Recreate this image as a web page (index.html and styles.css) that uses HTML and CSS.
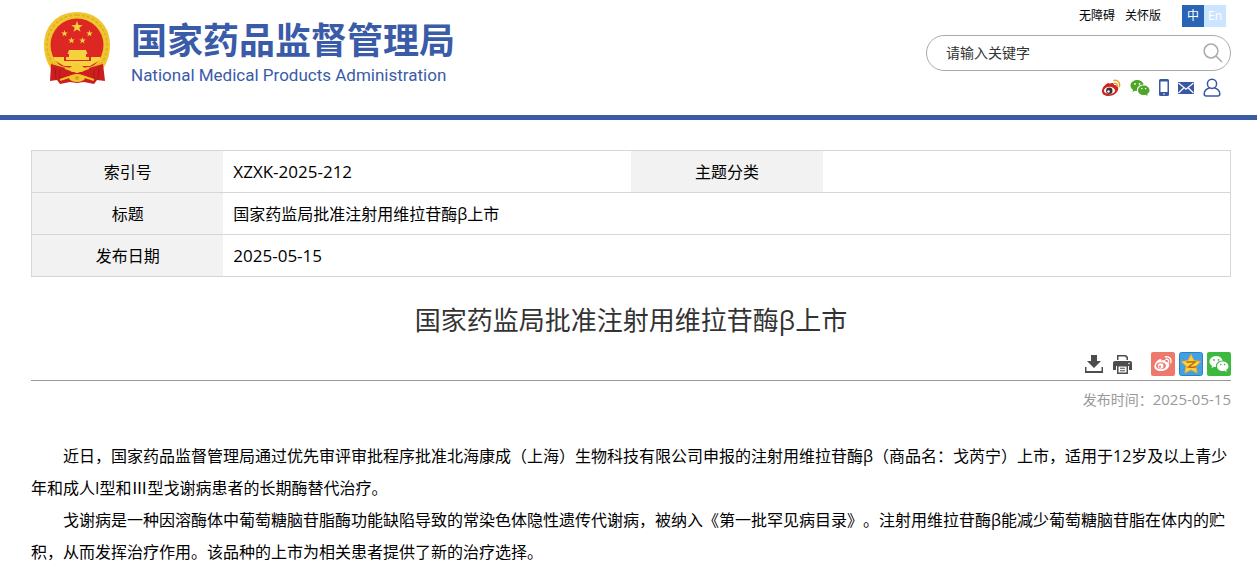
FILE: index.html
```html
<!DOCTYPE html>
<html lang="zh-CN">
<head>
<meta charset="utf-8">
<meta name="viewport" content="width=device-width, initial-scale=1">
<title>国家药监局批准注射用维拉苷酶β上市</title>
<link rel="stylesheet" href="styles.css">
</head>
<body>
<svg class="defs" aria-hidden="true">
  <symbol id="star" viewBox="-10 -10 20 20"><path d="M0-10 2.3-3.2 9.5-3.1 3.8 1.2 5.9 8.1 0 4-5.9 8.1-3.8 1.2-9.5-3.1-2.3-3.2z"/></symbol>
  <symbol id="wechat" viewBox="0 0 20 18">
    <path fill-rule="evenodd" d="M7.2 1C3.4 1 .5 3.500.5 6.500c0 1.800 1 3.400 2.600 4.400L2.500 13l2.500-1.300c.6.200 1.300.3 2 .3-.7-3.600 2.500-6.500 6.700-6.500C13 2.900 10.400 1 7.200 1zM5 4a.9.9 0 1 1 0 1.800A.9.9 0 0 1 5 4zm4.500 0a.9.900 0 1 1 0 1.800.9.900 0 0 1 0-1.800z"/>
    <path fill-rule="evenodd" d="M13.700 6.400c-3.200 0-5.700 2.100-5.700 4.800S10.500 16 13.700 16c.7 0 1.300-.1 1.900-.3l2.100 1.200-.5-1.900c1.400-.9 2.300-2.200 2.300-3.800 0-2.700-2.600-4.800-5.800-4.800zM11.800 8.800a.8.800 0 1 1 0 1.600.8.800 0 0 1 0-1.600zm3.800 0a.8.800 0 1 1 0 1.600.8.800 0 0 1 0-1.600z"/>
  </symbol>
</svg>
<header class="site-header">
  <a class="brand" href="#">
    <svg class="emblem" viewBox="0 0 68 76" aria-hidden="true">
      <path d="M34 1C14 1 1 15 1 34c0 14 6 25 14 31h38c8-6 14-17 14-31C67 15 54 1 34 1z" fill="#efc62f"/>
      <path d="M34 4C17 4 4 17 4 34c0 10 4 18 9 23" fill="none" stroke="#dfae24" stroke-width="1.500" stroke-dasharray="3 2"/>
      <path d="M34 4c17 0 30 13 30 30 0 10-4 18-9 23" fill="none" stroke="#dfae24" stroke-width="1.500" stroke-dasharray="3 2"/>
      <circle cx="34" cy="34" r="26.500" fill="#dd2722"/>
      <g fill="#f6d23f">
        <use href="#star" x="28" y="10" width="12" height="12"/>
        <use href="#star" x="18" y="19" width="7" height="7"/>
        <use href="#star" x="43" y="19" width="7" height="7"/>
        <use href="#star" x="25" y="26" width="7" height="7"/>
        <use href="#star" x="36" y="26" width="7" height="7"/>
        <path d="M26 39h17l1.500 4H43v3h3v3H23v-3h3v-3h-1.500z"/>
        <path d="M11 46h10v4h27v-4h9v3L47 55H21l-10-6z"/>
      </g>
      <path d="M11 50q5 7 23 7t23-7v6l-8 3H19l-8-3z" fill="#e9b92c"/>
      <path d="M8 53l14 4 7 4h10l7-4 14-4 2 17-8-1-3 4-10-2-7 1-7-1-10 2-3-4-7 1z" fill="#cc1e1f"/>
      <path d="M12 57l1 11M17 59v11M51 59v11M56 57l-1 11" stroke="#a91519"/>
      <path d="M22 57l12 4 12-4M17 69l12-4m22 4-12-4" fill="none" stroke="#f0c52e" stroke-width="2"/>
      <ellipse cx="34" cy="67" rx="8" ry="4" fill="#f0c52e"/>
      <path d="M25 58l4-3 2-3 3 1 3-1 2 3 4 3-9 4z" fill="#f5cd38"/>
      <circle cx="34" cy="67" r="2" fill="#d9a31d"/>
    </svg>
    <span class="brand-text">
      <span class="brand-cn">国家药品监督管理局</span>
      <span class="brand-en">National Medical Products Administration</span>
    </span>
  </a>
  <div class="tools">
    <nav class="top-links" aria-label="辅助功能">
      <a href="#">无障碍</a>
      <a href="#">关怀版</a>
      <span class="langs"><a class="lang lang-on" href="#">中</a><a class="lang" href="#" lang="en">En</a></span>
    </nav>
    <form class="search">
      <input class="search-input" type="text" placeholder="请输入关键字" aria-label="请输入关键字">
      <button class="search-button" type="button" aria-label="搜索">
        <svg width="20" height="20" viewBox="0 0 20 20" fill="none" stroke="#aaa" stroke-width="1.500"><circle cx="8" cy="8" r="6.900"/><path d="M13 13l6 6"/></svg>
      </button>
    </form>
    <nav class="social" aria-label="联系方式">
      <a href="#" aria-label="微博">
        <svg width="20" height="18" viewBox="0 0 20 18"><path d="M8 5c2-1 5-2 5 1 3 0 5 2 4 5s-5 6-9.500 6S.500 14.500 1 11.500C1.500 8 5.500 4 7.500 4c1 0 1.200.5.500 1z" fill="#cf2424"/><ellipse cx="8.500" cy="11.500" rx="5.500" ry="3.700" fill="#fff"/><circle cx="8.300" cy="11.800" r="3.200" fill="#3a2d2d"/><circle cx="7.500" cy="12.500" r="1.200" fill="#fff"/><path d="M13 1.500c4-.8 6.500 2.500 5.300 6M13.500 4.200c2-.3 3 1 2.500 2.800" fill="none" stroke="#eaa12e" stroke-width="1.500" stroke-linecap="round"/></svg>
      </a>
      <a href="#" aria-label="微信"><svg width="20" height="18" fill="#4da628"><use href="#wechat"/></svg></a>
      <a href="#" aria-label="手机版">
        <svg width="10" height="17" viewBox="0 0 10 17"><rect width="10" height="17" rx="1.500" fill="#3a58a2"/><path d="M1.500 2.500h7V13h-7z" fill="#fff"/><circle cx="5" cy="15" r=".8" fill="#fff"/></svg>
      </a>
      <a href="#" aria-label="邮箱">
        <svg width="16" height="12" viewBox="0 0 16 12"><path d="M0 0h16v12H0z" fill="#3a58a2"/><path d="M.500 1 8 7.200 15.500 1M.500 11 5.700 6M15.500 11l-5.200-5" fill="none" stroke="#fff" stroke-width="1.200"/></svg>
      </a>
      <a href="#" aria-label="个人中心">
        <svg width="18" height="19" viewBox="0 0 18 19" fill="none" stroke="#3a58a2" stroke-width="1.500"><circle cx="9" cy="5.800" r="4.600"/><path d="M6.500 10C3 11 1.200 13.500 1.200 16c0 1.500.5 2 2 2h11.600c1.500 0 2-.5 2-2 0-2.500-1.800-5-5.300-6"/></svg>
      </a>
    </nav>
  </div>
</header>
<main class="page">
  <table class="meta">
    <colgroup><col class="col-label"><col class="col-value"><col class="col-label"><col class="col-value"></colgroup>
    <tbody>
      <tr><th scope="row">索引号</th><td><span class="latin">XZXK-2025-212</span></td><th scope="row">主题分类</th><td></td></tr>
      <tr><th scope="row">标题</th><td colspan="3">国家药监局批准注射用维拉苷酶β上市</td></tr>
      <tr><th scope="row">发布日期</th><td colspan="3"><span class="latin">2025-05-15</span></td></tr>
    </tbody>
  </table>
  <h1 class="title">国家药监局批准注射用维拉苷酶β上市</h1>
  <div class="actions">
    <button class="action" type="button" aria-label="下载">
      <svg width="18" height="18" viewBox="0 0 18 18" fill="#4d4d4d"><path d="M6 0h6v6h4l-7 7-7-7h4z"/><path d="M0 12h1.500v4h15v-4H18v6H0z"/></svg>
    </button>
    <button class="action" type="button" aria-label="打印">
      <svg width="19" height="19" viewBox="0 0 19 19"><path d="M4 0h9l2 2v3H4z" fill="#4d4d4d"/><path d="M5.500 1.500h7v1h1V5h-8z" fill="#fff"/><path d="M2 6h15a2 2 0 0 1 2 2v7h-3v-4H3v4H0V8a2 2 0 0 1 2-2z" fill="#4d4d4d"/><circle cx="16" cy="8.500" r=".8" fill="#fff"/><path d="M4 10h11v9H4z" fill="#4d4d4d"/><path d="M5.500 11.500h8v6h-8z" fill="#fff"/><path d="M7 13.250h5M7 15.750h5" stroke="#4d4d4d" stroke-width="1.200"/></svg>
    </button>
    <span class="shares">
      <a class="share" href="#" aria-label="分享到微博">
        <svg width="24" height="24" viewBox="0 0 24 24"><rect width="24" height="24" rx="2" fill="#ef786c"/><path d="M10 9c2-1.200 5-1.500 4.600.8 2.900.4 4.400 2 3.500 4.400C17 17 13.500 19 10 19c-3.800 0-7-1.800-6.600-4.800C3.700 11 7 7 9.500 7c1 0 1.200 1 .5 2z" fill="#fff"/><ellipse cx="10" cy="13.800" rx="5" ry="3.500" fill="#ef786c"/><circle cx="9.700" cy="14" r="2.800" fill="#fff"/><circle cx="9" cy="14.700" r="1.100" fill="#ef786c"/><path d="M14.500 4.800c4-.6 6.500 2.500 5.300 6M15 7.300c2-.3 3.100 1 2.500 2.700" fill="none" stroke="#fff" stroke-width="1.400" stroke-linecap="round"/></svg>
      </a>
      <a class="share" href="#" aria-label="分享到QQ空间">
        <svg width="24" height="24" viewBox="0 0 24 24"><rect x=".5" y=".5" width="23" height="23" rx="2" fill="#42a0e3" stroke="#2681c5"/><path d="M12 2.500l3 6.200 6.800.8-5 4.700 1.300 6.800-6.100-3.300L5.900 21l1.300-6.800-5-4.700 6.800-.8z" fill="#fcd13b" stroke="#f3ad24" stroke-linejoin="round"/><path d="M7.500 10.200c3-.6 6-.6 8.500-.2l-6.500 5c2.500.4 5 .3 7.500-.3" fill="none" stroke="#b96b19" stroke-width="1.500"/></svg>
      </a>
      <a class="share" href="#" aria-label="分享到微信">
        <svg width="24" height="24" viewBox="0 0 24 24"><rect width="24" height="24" rx="2" fill="#3eb93f"/><use href="#wechat" x="2" y="3" width="20" height="18" fill="#fff"/></svg>
      </a>
    </span>
  </div>
  <p class="published">发布时间：<time class="latin-small" datetime="2025-05-15">2025-05-15</time></p>
  <article class="content">
    <p>近日，国家药品监督管理局通过优先审评审批程序批准北海康成（上海）生物科技有限公司申报的注射用维拉苷酶β（商品名：戈芮宁）上市，适用于12岁及以上青少年和成人I型和Ⅲ型戈谢病患者的长期酶替代治疗。</p>
    <p>戈谢病是一种因溶酶体中葡萄糖脑苷脂酶功能缺陷导致的常染色体隐性遗传代谢病，被纳入《第一批罕见病目录》。注射用维拉苷酶β能减少葡萄糖脑苷脂在体内的贮积，从而发挥治疗作用。该品种的上市为相关患者提供了新的治疗选择。</p>
  </article>
</main>
</body>
</html>
```
FILE: styles.css
```css
* {
  box-sizing: border-box;
}

body {
  margin: 0;
  background: #fff;
  color: #000;
  font: 16px/32px "Open Sans", "Noto Sans CJK SC", sans-serif;
  text-spacing-trim: space-all;
}

a {
  color: inherit;
  text-decoration: none;
}

button {
  display: block;
  padding: 0;
  border: 0;
  background: none;
  cursor: pointer;
}

svg {
  display: block;
}

.defs {
  position: absolute;
  width: 0;
  height: 0;
}

.site-header {
  display: flex;
  justify-content: space-between;
  align-items: flex-start;
  height: 120px;
  padding: 5px 26px 0 43px;
  border-bottom: 5px solid #3a5ba5;
}

.brand {
  display: flex;
  gap: 20px;
  padding-top: 6px;
  color: #3a5ba8;
}

.emblem {
  width: 68px;
  height: 76px;
}

.brand-text {
  display: flex;
  flex-direction: column;
  padding-top: 8px;
  white-space: nowrap;
}

.brand-cn {
  font-size: 36px;
  font-weight: 700;
  line-height: 44px;
}

.brand-en {
  font-family: Roboto, sans-serif;
  font-size: 17px;
  line-height: 24px;
}

.tools {
  display: flex;
  flex-direction: column;
  width: 305px;
}

.top-links {
  display: flex;
  justify-content: flex-end;
  gap: 10px;
  padding-right: 5px;
  font-size: 12px;
  line-height: 22px;
}

.langs {
  display: flex;
  margin-left: 11px;
}

.lang {
  width: 22px;
  background: #cce5ff;
  color: #fff;
  text-align: center;
}

.lang-on {
  background: #2866b5;
}

.search {
  display: flex;
  align-items: center;
  height: 36px;
  margin-top: 8px;
  padding: 0 7px 0 19px;
  border: 1px solid #aaa;
  border-radius: 18px;
}

.search-input {
  flex: 1;
  min-width: 0;
  padding: 0;
  border: 0;
  outline: 0;
  background: none;
  color: #333;
  font: inherit;
  font-size: 14px;
}

.search-input::placeholder {
  color: #333;
  opacity: 1;
}

.social {
  display: flex;
  justify-content: flex-end;
  align-items: center;
  gap: 9px;
  padding: 7px 10px 0 0;
}

.page {
  padding: 30px 26px 0 31px;
}

.meta {
  width: 100%;
  border: 1px solid #d6d6d6;
  border-collapse: collapse;
  table-layout: fixed;
}

.col-label {
  width: 16%;
}

.col-value {
  width: 34%;
}

.meta tr {
  border-bottom: 1px solid #d6d6d6;
}

.meta th,
.meta td {
  height: 42px;
  padding: 0 10px;
  text-align: left;
  font-weight: 400;
}

.meta th {
  background: #f2f2f2;
  text-align: center;
}

.latin {
  font-size: 17px;
}

.latin-small {
  font-size: 15px;
}

.title {
  margin: 23px 0 0;
  color: #333;
  font-size: 26px;
  font-weight: 400;
  line-height: 40px;
  text-align: center;
}

.actions {
  display: flex;
  justify-content: flex-end;
  align-items: center;
  gap: 10px;
  margin-top: 12px;
  padding-bottom: 4px;
  border-bottom: 1px solid #999;
}

.shares {
  display: flex;
  gap: 4px;
  margin-left: 9px;
}

.published {
  margin: 2px 0 24px;
  color: #999;
  font-size: 14px;
  text-align: right;
}

.content p {
  margin: 0;
  text-indent: 2em;
}
```
